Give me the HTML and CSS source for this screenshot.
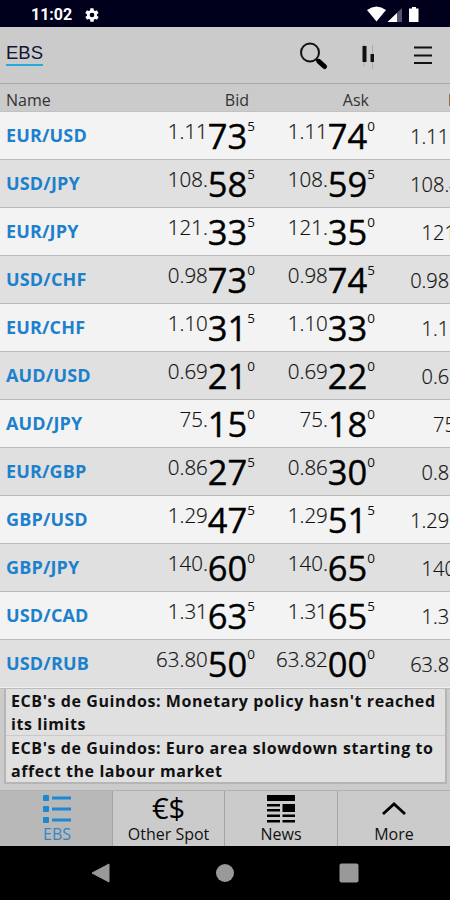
FILE: index.html
```html
<!DOCTYPE html>
<html lang="en">
<head>
<meta charset="utf-8">
<title>EBS</title>
<meta name="viewport" content="width=device-width, initial-scale=1.0">
<link rel="stylesheet" href="styles.css">
</head>
<body>
<div class="phone">
    <div class="status">
        <span class="time">11:02</span>
        <svg class="gear" viewBox="0 0 24 24"><path fill="#fff" fill-rule="evenodd" d="M19.4 13a7.500 7.500 0 0 0 0-2l2.100-1.600a.5.5 0 0 0 .1-.6l-2-3.500a.5.5 0 0 0-.6-.2l-2.500 1a7.300 7.300 0 0 0-1.700-1L14.400 2.400a.5.5 0 0 0-.5-.4h-4a.5.5 0 0 0-.5.4L9 5.100a7.300 7.300 0 0 0-1.700 1l-2.500-1a.5.5 0 0 0-.6.2l-2 3.500a.5.5 0 0 0 .1.6L4.500 11a7.500 7.500 0 0 0 0 2l-2.100 1.600a.5.5 0 0 0-.1.6l2 3.500c.1.2.4.3.6.2l2.500-1a7.300 7.300 0 0 0 1.700 1l.4 2.700c0 .2.200.4.5.4h4c.2 0 .5-.2.5-.4l.4-2.700a7.300 7.300 0 0 0 1.700-1l2.500 1c.2.1.500 0 .6-.2l2-3.500a.5.5 0 0 0-.1-.6zM12 15.500a3.500 3.500 0 1 1 0-7 3.500 3.500 0 0 1 0 7z"/></svg>
        <svg class="signals" width="54" height="18" viewBox="0 0 54 18">
            <path fill="#fff" d="M0 4Q9.500-3 19 4L9.500 15.500z"/>
            <path fill="#55556a" d="M35 2v14H20.500z"/>
            <path fill="#fff" d="M30 7v9h-9.500z"/>
            <path fill="#fff" d="M45 1h4v1.500h2.500V16h-9.500V2.500h3z"/>
        </svg>
    </div>

    <header class="topbar">
        <span class="brand">EBS</span>
        <div class="actions">
            <svg width="30" height="30" viewBox="0 0 30 30"><circle cx="12" cy="11.500" r="9" fill="none" stroke="#111" stroke-width="2"/><path d="M18 18l3 3" stroke="#111" stroke-width="2.500"/><path d="M21 20.500l5.500 5" stroke="#000" stroke-width="5" stroke-linecap="round"/></svg>
            <svg width="14" height="26" viewBox="0 0 14 26"><path d="M3 1v22M11.500 2v24" stroke="#aaa"/><path d="M1.500 3h4v16h-4z" fill="#111"/><path d="M9.500 11h3.500v8H9.500z" fill="#111"/></svg>
            <svg width="20" height="20" viewBox="0 0 20 20"><path d="M1 2.500h18M1 10.500h18M1 18h18" stroke="#111" stroke-width="2"/></svg>
        </div>
    </header>

    <div class="rates">
        <div class="row head"><span>Name</span><span class="num">Bid</span><span class="num">Ask</span><span class="high">High</span></div>
        <div class="row"><span class="pair">EUR/USD</span><span class="price">1.11<b>73</b><sup>5</sup></span><span class="price">1.11<b>74</b><sup>0</sup></span><span class="high">1.1178</span></div>
        <div class="row"><span class="pair">USD/JPY</span><span class="price">108.<b>58</b><sup>5</sup></span><span class="price">108.<b>59</b><sup>5</sup></span><span class="high">108.48</span></div>
        <div class="row"><span class="pair">EUR/JPY</span><span class="price">121.<b>33</b><sup>5</sup></span><span class="price">121.<b>35</b><sup>0</sup></span><span class="high">121.4</span></div>
        <div class="row"><span class="pair">USD/CHF</span><span class="price">0.98<b>73</b><sup>0</sup></span><span class="price">0.98<b>74</b><sup>5</sup></span><span class="high">0.9890</span></div>
        <div class="row"><span class="pair">EUR/CHF</span><span class="price">1.10<b>31</b><sup>5</sup></span><span class="price">1.10<b>33</b><sup>0</sup></span><span class="high">1.104</span></div>
        <div class="row"><span class="pair">AUD/USD</span><span class="price">0.69<b>21</b><sup>0</sup></span><span class="price">0.69<b>22</b><sup>0</sup></span><span class="high">0.693</span></div>
        <div class="row"><span class="pair">AUD/JPY</span><span class="price">75.<b>15</b><sup>0</sup></span><span class="price">75.<b>18</b><sup>0</sup></span><span class="high">75.3</span></div>
        <div class="row"><span class="pair">EUR/GBP</span><span class="price">0.86<b>27</b><sup>5</sup></span><span class="price">0.86<b>30</b><sup>0</sup></span><span class="high">0.864</span></div>
        <div class="row"><span class="pair">GBP/USD</span><span class="price">1.29<b>47</b><sup>5</sup></span><span class="price">1.29<b>51</b><sup>5</sup></span><span class="high">1.2969</span></div>
        <div class="row"><span class="pair">GBP/JPY</span><span class="price">140.<b>60</b><sup>0</sup></span><span class="price">140.<b>65</b><sup>0</sup></span><span class="high">140.8</span></div>
        <div class="row"><span class="pair">USD/CAD</span><span class="price">1.31<b>63</b><sup>5</sup></span><span class="price">1.31<b>65</b><sup>5</sup></span><span class="high">1.317</span></div>
        <div class="row"><span class="pair">USD/RUB</span><span class="price">63.80<b>50</b><sup>0</sup></span><span class="price">63.82<b>00</b><sup>0</sup></span><span class="high">63.890</span></div>
    </div>

    <div class="news">
        <div class="items">
            <p>ECB's de Guindos: Monetary policy hasn't reached its limits</p>
            <p>ECB's de Guindos: Euro area slowdown starting to affect the labour market</p>
        </div>
    </div>

    <nav class="tabs">
        <a class="tab active">
            <svg width="28" height="28" viewBox="0 0 28 28" fill="#1c87d2"><rect width="6" height="6" y="0" rx="1"/><rect width="6" height="6" y="11" rx="1"/><rect width="6" height="6" y="22" rx="1"/><path d="M9 1.500h19v3H9zM9 12.500h19v3H9zM9 23.500h19v3H9z"/></svg>
            <span>EBS</span>
        </a>
        <a class="tab">
            <span class="currency">€$</span>
            <span>Other Spot</span>
        </a>
        <a class="tab">
            <svg width="28" height="28" viewBox="0 0 28 28"><path d="M0 0h28v6H0zM0 9h13v2.500H0zM0 14h13v2.500H0zM15.500 9H28v8H15.500zM0 19.500h13V22H0zM15.500 19.500H28V22H15.500zM0 25h13v2.500H0zM15.500 25H28v2.500H15.500z"/></svg>
            <span>News</span>
        </a>
        <a class="tab">
            <svg width="28" height="28" viewBox="0 0 28 28"><path d="M3 19L14 9l11 10" fill="none" stroke="#000" stroke-width="2.800"/></svg>
            <span>More</span>
        </a>
    </nav>

    <div class="sysnav">
        <svg width="20" height="20" viewBox="0 0 20 20"><path d="M1 10L18 1v18z" fill="#999" stroke="#999" stroke-linejoin="round"/></svg>
        <svg width="20" height="20" viewBox="0 0 20 20"><circle cx="10" cy="10" r="9" fill="#999"/></svg>
        <svg width="20" height="20" viewBox="0 0 20 20"><rect x=".5" y=".5" width="19" height="19" rx="2" fill="#999"/></svg>
    </div>
</div>
</body>
</html>
```
FILE: styles.css
```css
* {
    margin: 0;
    padding: 0;
    box-sizing: border-box;
}

body {
    font-family: "Open Sans", sans-serif;
    color: #111;
    background: #000;
}

svg {
    display: block;
}

.phone {
    width: 450px;
    height: 900px;
    overflow: hidden;
    background: #cbcbcb;
}

.status {
    display: flex;
    align-items: center;
    height: 27px;
    padding: 2px 29px 0 31px;
    background: #00001c;
    color: #fff;
}

.time {
    width: 53px;
    font: 700 16px Roboto, sans-serif;
}

.gear {
    width: 16px;
    height: 16px;
}

.signals {
    margin-left: auto;
}

.topbar {
    display: flex;
    justify-content: space-between;
    height: 57px;
    padding: 0 17px 0 6px;
    border-bottom: 1px solid #a9a9a9;
}

.brand {
    height: 22px;
    margin-top: 17px;
    border-bottom: 2px solid #27a9dc;
    color: #101735;
    font: 400 18.5px/17px "Liberation Sans", sans-serif;
}

.actions {
    display: flex;
    align-items: center;
}

.actions svg:first-child {
    margin-top: 1px;
}

.actions svg:nth-child(2) {
    margin: 2px 38px 0 33px;
}

.row {
    display: grid;
    grid-template-columns: 107px 148px 120px 97px;
    width: 472px;
    height: 48px;
    border-bottom: 1px solid #bababa;
    background: #f3f3f3;
}

.row:nth-child(odd) {
    background: #e0e0e0;
}

.row:last-child {
    border-bottom-color: #f0f0f0;
}

.rates .head {
    height: 28px;
    background: #cbcbcb;
    border-bottom-color: #c2c2c2;
    color: #333;
    font-size: 16px;
    line-height: 32px;
}

.head span:first-child {
    padding-left: 6px;
}

.num {
    padding-right: 6px;
    text-align: right;
}

.head .high {
    padding-left: 73px;
    font-size: 16px;
    font-weight: 400;
    line-height: 32px;
}

.pair {
    padding-left: 6px;
    color: #1c80cc;
    font-size: 18px;
    font-weight: 700;
    line-height: 47px;
    letter-spacing: .15px;
}

.price {
    display: flex;
    justify-content: flex-end;
    padding-top: 9px;
    font-size: 20.5px;
    font-weight: 300;
    line-height: 20px;
    -webkit-text-stroke: .2px #111;
}

.price b {
    margin-top: -3px;
    color: #000;
    font-size: 34.5px;
    font-weight: 500;
    line-height: 35px;
    -webkit-text-stroke: .4px #000;
}

.price sup {
    margin-top: -2px;
    font-size: 13.5px;
    font-weight: 400;
    line-height: 14px;
    -webkit-text-stroke: 0;
}

.high {
    text-align: right;
    font-size: 20px;
    font-weight: 300;
    line-height: 49px;
    -webkit-text-stroke: .2px #111;
}

.news {
    height: 102px;
    padding: 0 3px 6px 4px;
    border-top: 1px solid #bbb;
    background: #cbcbcb;
}

.items {
    height: 95px;
    border: 2px solid #b5b5b5;
    border-top: 0;
    background: #e0e0e0;
}

.items p {
    height: 46px;
    padding: 1px 4px 0 5px;
    color: #111;
    font-size: 16px;
    font-weight: 700;
    line-height: 23px;
    letter-spacing: .59px;
}

.items p + p {
    border-top: 1px solid #c9c9c9;
}

.tabs {
    display: grid;
    grid-template-columns: 112px 112px 113px 113px;
    height: 56px;
    border-top: 1px solid #b0b0b0;
}

.tab {
    display: flex;
    flex-direction: column;
    align-items: center;
    padding-top: 4px;
    border-left: 1px solid #a5a5a5;
    font-size: 16px;
    line-height: 22px;
}

.tab.active {
    padding-left: 2px;
    border-left: 0;
    background: #b8b8b8;
    color: #3487c4;
}

.currency {
    height: 28px;
    color: #000;
    font-size: 29px;
    line-height: 26px;
}

.sysnav {
    display: flex;
    gap: 104px;
    height: 54px;
    padding: 17px 0 0 91px;
    background: #000;
}
```
